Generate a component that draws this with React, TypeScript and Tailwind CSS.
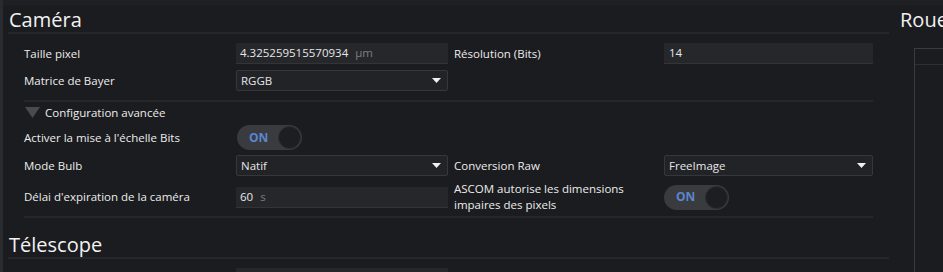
import React from "react";

const font = { fontFamily: '"Open Sans", "Noto Sans", sans-serif' };

function Input({ value, unit }: { value: string; unit?: string }) {
  return (
    <div className="h-[21px] w-[212px] bg-[#26272b] border-b border-[#333438] flex items-center px-[4px] text-[11.5px] text-[#e6e6e6]">
      <span>{value}</span>
      {unit && <span className="ml-[7px] text-[#7c7d80]">{unit}</span>}
    </div>
  );
}

function Select({ value, w = "w-[212px]" }: { value: string; w?: string }) {
  return (
    <div className={`h-[21px] ${w} bg-[#222327] border border-[#36373b] rounded-[2px] flex items-center justify-between px-[4px] text-[11.5px] text-[#e6e6e6]`}>
      <span>{value}</span>
      <svg width="9" height="6" viewBox="0 0 9 6" className="mr-[2px]">
        <path d="M0 0 H9 L4.5 5 Z" fill="#f0f0f0" />
      </svg>
    </div>
  );
}

function Toggle() {
  return (
    <div className="h-[25px] w-[65px] rounded-full bg-[#3a3b3f] flex items-center justify-between pl-[12px] pr-[1px]">
      <span className="text-[12px] font-bold text-[#5b86d0]">ON</span>
      <div className="h-[23px] w-[23px] rounded-full bg-[#1d1e21] border border-[#2c2d31]" />
    </div>
  );
}

function Label({ children }: { children: React.ReactNode }) {
  return <div className="text-[11.5px] text-[#ececec] leading-[16px]">{children}</div>;
}

export default function App() {
  return (
    <div className="w-[943px] h-[272px] bg-[#1b1c1f] overflow-hidden flex items-start" style={font}>
      <div className="w-[3px] h-[272px] bg-[#2a2b2e] shrink-0" />
      <div className="w-[886px] shrink-0">
        <div className="h-[5px] bg-[#1f2023]" />
        <div className="pl-[6px] pt-[2px] text-[20px] leading-[25px] text-[#f2f2f2] h-[27px]">Caméra</div>
        <div className="ml-[5px] h-[2px] bg-[#26272a]" />
        <div className="pl-[21px] pt-[9px]">
          <div className="grid grid-cols-[212px_218px_210px_209px] items-center gap-y-[6px]">
            <Label>Taille pixel</Label>
            <Input value="4.325259515570934" unit="µm" />
            <Label>Résolution (Bits)</Label>
            <div className="h-[21px] w-[209px] bg-[#26272b] border-b border-[#333438] flex items-center px-[5px] text-[11.5px] text-[#e6e6e6]">14</div>
            <Label>Matrice de Bayer</Label>
            <Select value="RGGB" />
            <div />
            <div />
          </div>
          <div className="mt-[9px] h-[2px] w-[849px] bg-[#26272a]" />
          <div className="flex items-center h-[20px] mt-[1px]">
            <svg width="16" height="12" viewBox="0 0 16 12" className="ml-[1px]">
              <path d="M0 0 H15 L7.5 11 Z" fill="#4a4b4f" />
            </svg>
            <span className="ml-[4px] text-[11.5px] text-[#ececec]">Configuration avancée</span>
          </div>
          <div className="grid grid-cols-[212px_218px_210px_209px] items-center gap-y-[5px] mt-[2px]">
            <Label>Activer la mise à l'échelle Bits</Label>
            <div className="pl-[1px]"><Toggle /></div>
            <div />
            <div />
            <Label>Mode Bulb</Label>
            <Select value="Natif" />
            <Label>Conversion Raw</Label>
            <Select value="FreeImage" w="w-[209px]" />
            <Label>Délai d'expiration de la caméra</Label>
            <Input value="60" unit="s" />
            <Label>ASCOM autorise les dimensions<br />impaires des pixels</Label>
            <Toggle />
          </div>
          <div className="mt-[3px] h-[2px] w-[849px] bg-[#26272a]" />
        </div>
        <div className="pl-[6px] pt-[15px] text-[20px] leading-[24px] text-[#f2f2f2] h-[39px]">Télescope</div>
        <div className="ml-[5px] h-[2px] bg-[#26272a]" />
        <div className="pl-[233px] pt-[9px]">
          <div className="h-[21px] w-[212px] bg-[#26272b]" />
        </div>
      </div>
      <div className="flex-1 h-[272px] flex flex-col">
        <div className="h-[5px] shrink-0 bg-[#1f2023]" />
        <div className="pl-[11px] pt-[2px] text-[20px] leading-[25px] text-[#f2f2f2] h-[27px] shrink-0 whitespace-nowrap">Roue</div>
        <div className="ml-[25px] mt-[16px] flex-1 border-l border-t border-[#3a3b3e]">
          <div className="h-[16px] border-b border-[#2e2f32]" />
        </div>
      </div>
    </div>
  );
}
